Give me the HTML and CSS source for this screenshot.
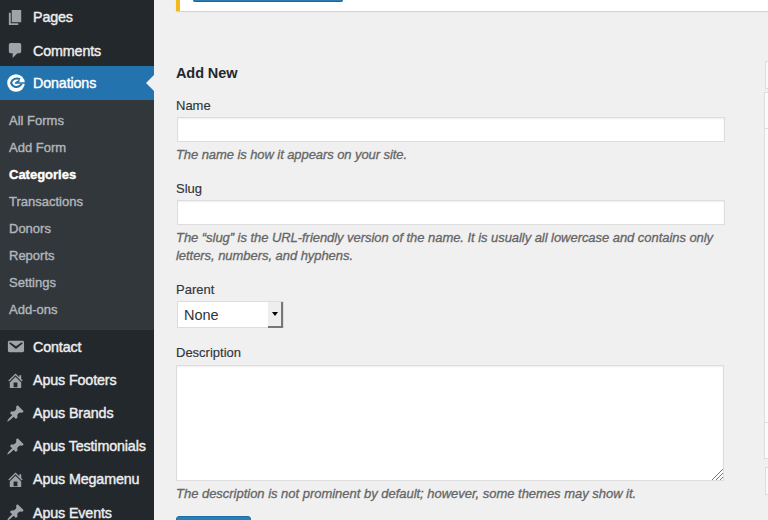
FILE: index.html
```
<!DOCTYPE html>
<html lang="en">
<head>
<meta charset="utf-8">
<title>Donation Categories</title>
<link rel="stylesheet" href="styles.css">
</head>
<body>
<svg class="defs" aria-hidden="true">
  <symbol id="pages" viewBox="0 0 20 20"><path d="M6 15V2h10v13H6zM5 16h8v2H3V5h2v11z"/></symbol>
  <symbol id="comments" viewBox="0 0 20 20"><path d="M5 2h9q.82 0 1.41.59T16 4v7q0 .82-.59 1.41T14 13h-2l-5 5v-5H5q-.82 0-1.41-.59T3 11V4q0-.82.59-1.41T5 2z"/></symbol>
  <symbol id="give" viewBox="0 0 20 20"><circle cx="10" cy="10" r="9.8"/><path class="swoosh" d="M14.500 5.800C10.500 3.600 5.600 5.600 4.500 10c2.500 5.700 8.500 6 12 .9"/><path class="swoosh thin" d="M20 9.900H9.500l4.500-2.700"/></symbol>
  <symbol id="email" viewBox="0 0 20 20"><path d="M3.870 4h13.250C18.370 4 19 4.590 19 5.790v8.420c0 1.190-.63 1.790-1.880 1.790H3.870c-1.250 0-1.880-.6-1.880-1.790V5.790c0-1.200.63-1.790 1.880-1.790zm6.620 8.600l6.740-5.530c.24-.2.430-.66.130-1.070-.29-.41-.82-.42-1.170-.17l-5.700 3.860L4.800 5.830c-.35-.25-.88-.24-1.170.17-.3.410-.11.870.13 1.070z"/></symbol>
  <symbol id="home" viewBox="0 0 20 20"><path d="M16 8.500l1.530 1.530-1.060 1.060L10 4.600l-6.470 6.490-1.060-1.060L10 2.500l4 4v-2h2v4zm-6-2.460l6 5.990V18H4v-5.970zM12 17v-5H8v5h4z"/></symbol>
  <symbol id="pin" viewBox="0 0 20 20"><path d="M10.440 3.020l1.820-1.820 6.360 6.350-1.830 1.820c-1.050-.68-2.480-.57-3.410.36l-.75.750c-.92.930-1.040 2.350-.35 3.410l-1.830 1.820-2.410-2.410-2.800 2.790c-.42.420-3.380 2.710-3.800 2.290s1.860-3.390 2.280-3.810l2.790-2.790L4.100 9.360l1.830-1.820c1.050.69 2.480.57 3.400-.36l.75-.75c.93-.92 1.050-2.350.36-3.410z"/></symbol>
</svg>
<div class="app">
  <nav class="sidebar">
    <a class="item"><svg class="icon"><use href="#pages"/></svg><span>Pages</span></a>
    <a class="item"><svg class="icon"><use href="#comments"/></svg><span>Comments</span></a>
    <a class="item current"><svg class="icon give"><use href="#give"/></svg><span>Donations</span></a>
    <div class="submenu">
      <a>All Forms</a>
      <a>Add Form</a>
      <a class="active">Categories</a>
      <a>Transactions</a>
      <a>Donors</a>
      <a>Reports</a>
      <a>Settings</a>
      <a>Add-ons</a>
    </div>
    <a class="item"><svg class="icon"><use href="#email"/></svg><span>Contact</span></a>
    <a class="item"><svg class="icon"><use href="#home"/></svg><span>Apus Footers</span></a>
    <a class="item"><svg class="icon"><use href="#pin"/></svg><span>Apus Brands</span></a>
    <a class="item"><svg class="icon"><use href="#pin"/></svg><span>Apus Testimonials</span></a>
    <a class="item"><svg class="icon"><use href="#home"/></svg><span>Apus Megamenu</span></a>
    <a class="item"><svg class="icon"><use href="#pin"/></svg><span>Apus Events</span></a>
  </nav>
  <main class="main">
    <div class="notice"><div class="notice-button"></div></div>
    <div class="columns">
      <form class="form">
        <h2>Add New</h2>
        <div class="field name">
          <label>Name</label>
          <div class="input"></div>
          <p>The name is how it appears on your site.</p>
        </div>
        <div class="field slug">
          <label>Slug</label>
          <div class="input"></div>
          <p>The “slug” is the URL-friendly version of the name. It is usually all lowercase and contains only<br>letters, numbers, and hyphens.</p>
        </div>
        <div class="field parent">
          <label>Parent</label>
          <div class="select"><span>None</span><div class="arrow"></div></div>
        </div>
        <div class="field description">
          <label>Description</label>
          <div class="textarea"><svg class="grip" viewBox="0 0 12 12"><path d="M1 12L12 1M5 12l7-7M9 12l3-3"/></svg></div>
          <p>The description is not prominent by default; however, some themes may show it.</p>
        </div>
        <div class="submit"></div>
      </form>
      <div class="list">
        <div class="bulk"></div>
        <div class="table"><div class="thead"></div><div class="tbody"></div><div class="tfoot"></div></div>
        <div class="bulk bottom"></div>
      </div>
    </div>
  </main>
</div>
</body>
</html>
```
FILE: styles.css
```
* { box-sizing: border-box; }
body { margin: 0; background: #f0f0f0; font: 13px/18.5px "Liberation Sans", Arial, sans-serif; color: #30353a; overflow: hidden; }
.defs { position: absolute; width: 0; height: 0; }
.swoosh { fill: none; stroke: #2373ae; stroke-width: 2.2; stroke-linejoin: round; }
.thin { stroke-width: 1.7; }
.app { display: flex; height: 520px; overflow: hidden; }

.sidebar { width: 154px; flex: none; background: #23282d; padding-top: 1px; }
.item { display: flex; align-items: center; height: 33.200px; padding-left: 6px; color: #eee; font-size: 14.300px; letter-spacing: -.13px; white-space: nowrap; -webkit-text-stroke: .4px; }
.icon { width: 19px; height: 19px; margin-right: 8px; fill: #9fa4a9; flex: none; }
.current { position: relative; height: 33.500px; margin-top: -1px; padding-top: 1px; background: #2373ae; color: #fff; }
.current .give { fill: #fff; width: 18px; height: 18px; margin: 0 8px 2px 1px; }
.current::after { content: ""; position: absolute; right: 0; top: 9px; border: 8px solid transparent; border-right-color: #f0f0f0; border-left: 0; }
.submenu { height: 230.500px; padding: 8px 0 0 9px; background: #32373c; }
.submenu a { display: flex; align-items: center; height: 26.950px; color: #b0b5ba; font-size: 13px; -webkit-text-stroke: .4px; }
.submenu .active { color: #fff; font-weight: bold; }

.main { flex: 1; min-width: 0; padding-left: 22px; }
.notice { height: 11px; padding-left: 13px; border-left: 4px solid #f0b91d; background: #fff; box-shadow: 0 1px 1px #d5d5d5; }
.notice-button { width: 150px; height: 2px; background: #2b7ab3; border-bottom: 1px solid #1d659a; border-radius: 0 0 3px 3px; }
.columns { display: flex; }
.form { width: 549px; flex: none; }
h2 { margin: 53px 0 0; font-size: 14.500px; letter-spacing: -.1px; line-height: 18px; color: #23282d; }
.field label { display: block; height: 18px; line-height: 18px; -webkit-text-stroke: .15px; }
.field p { margin: 0; color: #666; font-style: italic; letter-spacing: -.05px; white-space: nowrap; -webkit-text-stroke: .3px; }
.name p { letter-spacing: -.08px; }
.description p { letter-spacing: -.02px; }
.input { height: 25px; margin-left: 1px; border: 1px solid #ddd; background: #fff; box-shadow: inset 0 1px 2px #eee; }
.name { margin-top: 15px; }
.name .input, .slug .input { margin-top: 2px; margin-bottom: 4px; }
.slug { margin-top: 15px; }
.parent { margin-top: 15px; }
.select { display: flex; justify-content: space-between; width: 107px; height: 27px; margin: 2px 0 0 1px; border: 1px solid #ddd; background: #fff; font-size: 14.500px; line-height: 26px; padding-left: 6px; }
.arrow { width: 15px; height: 26px; background: #eee; border: solid #777; border-width: 0 2px 2px 0; }
.arrow::after { content: ""; display: block; margin: 10px 0 0 4px; width: 0; border: 3px solid transparent; border-top: 4px solid #000; border-bottom: 0; }
.description { margin-top: 16px; }
.textarea { display: flex; align-items: flex-end; justify-content: flex-end; width: 548px; height: 116px; margin: 3px 0 4px; border: 1px solid #ddd; background: #fff; box-shadow: inset 0 1px 2px #eee; }
.grip { width: 12px; height: 12px; fill: none; stroke: #777; stroke-width: 1; }
.submit { width: 75px; height: 20px; margin-top: 13px; background: #2880b9; border: 1px solid #1d6fa5; border-radius: 3px; }

.list { width: 60px; flex: none; margin-left: 39px; padding-top: 50px; }
.bulk { height: 28px; margin-left: 1px; border: 1px solid #ddd; background: #fafafa; }
.table { height: 367px; margin-top: 3px; border: 1px solid #ddd; background: #fcfcfc; display: flex; flex-direction: column; }
.thead { height: 36px; border-bottom: 1px solid #ddd; }
.tbody { flex: 1; }
.tfoot { height: 36px; border-top: 1px solid #ddd; }
.bottom { margin-top: 8px; }
```
